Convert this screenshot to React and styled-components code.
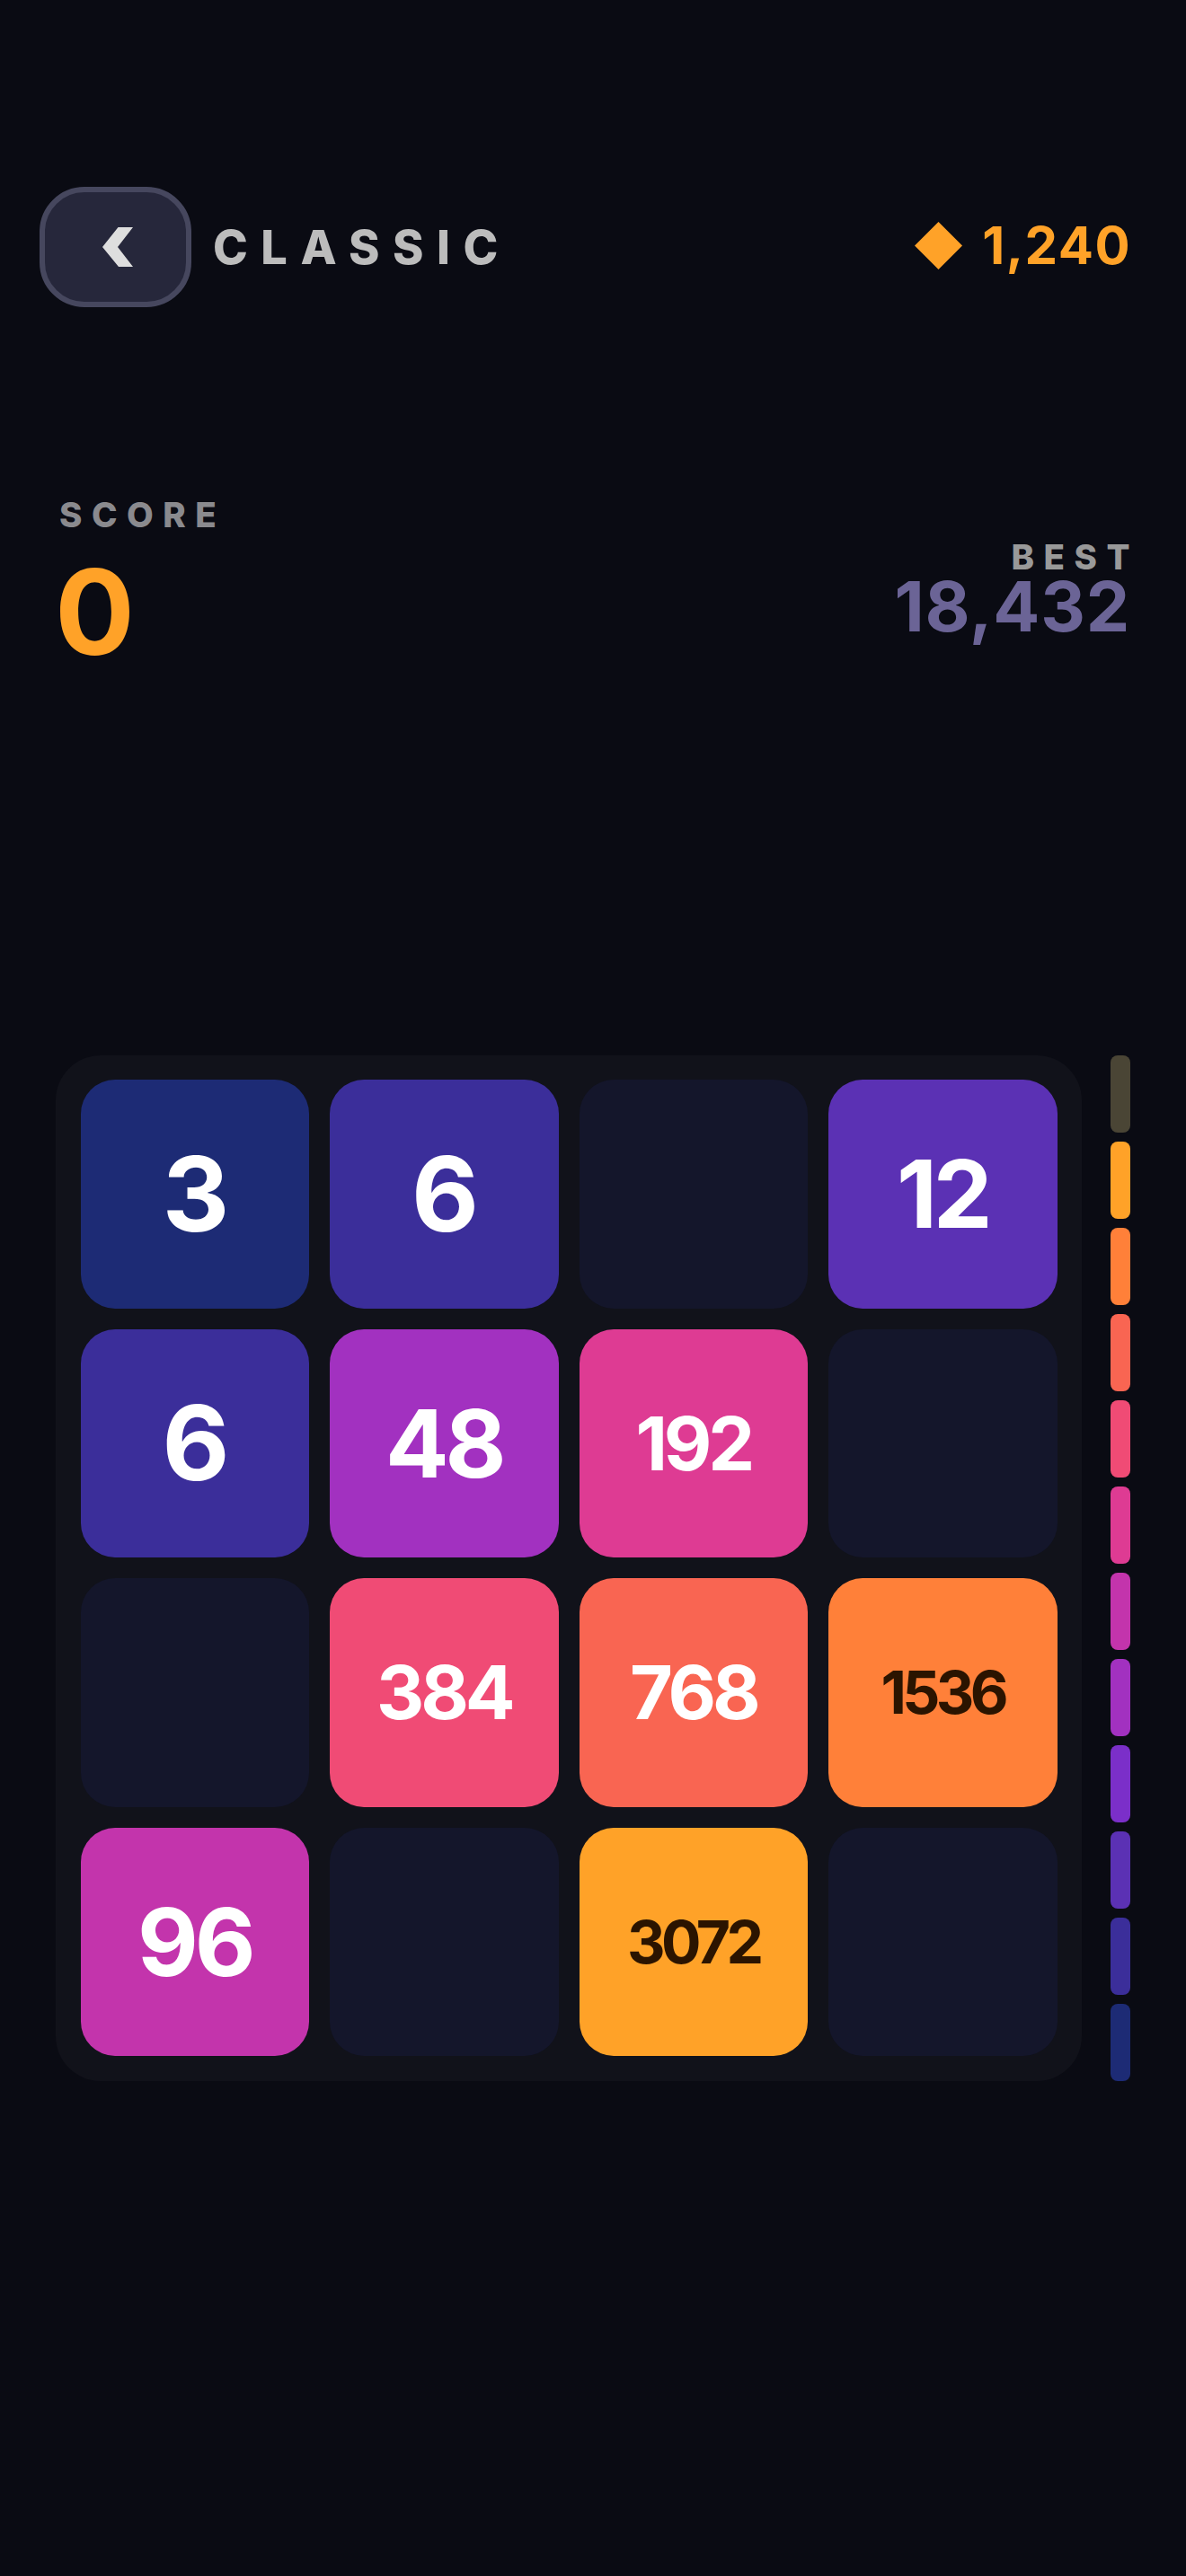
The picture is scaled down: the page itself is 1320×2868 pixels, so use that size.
import React from 'react'
import styled, { createGlobalStyle } from 'styled-components'

const GlobalStyle = createGlobalStyle`
  html, body {
    margin: 0;
    padding: 0;
    background: #0a0b13;
  }
  * {
    box-sizing: border-box;
  }
`

const Page = styled.div`
  width: 1320px;
  height: 2868px;
  overflow: hidden;
  padding-top: 208px;
  background: #0a0b13;
  font-family: Inter, "Liberation Sans", sans-serif;
`

const Header = styled.header`
  display: flex;
  align-items: center;
  justify-content: space-between;
  height: 134px;
  padding: 0 61px 0 44px;
`

const HeaderLeft = styled.div`
  display: flex;
  align-items: center;
  gap: 24px;
`

const BackButton = styled.button`
  display: flex;
  align-items: center;
  justify-content: center;
  width: 169px;
  height: 134px;
  padding: 0 0 0 4px;
  border: 6.5px solid #46475e;
  border-radius: 50px;
  background: #26273b;
`

const Title = styled.h1`
  margin: 0;
  font-size: 52.25px;
  font-weight: 800;
  line-height: 1;
  letter-spacing: 14.5px;
  color: #bcbcbc;
`

const Coins = styled.div`
  display: flex;
  align-items: center;
  gap: 22px;
  margin-bottom: 4px;
  font-size: 58px;
  font-weight: 700;
  line-height: 1;
  letter-spacing: 1.5px;
  color: #ffa228;
`

const ScoreRow = styled.section`
  display: flex;
  align-items: flex-end;
  justify-content: space-between;
  margin-top: 212px;
  padding: 0 62px 0 66px;
`

const ScoreBox = styled.div`
  display: flex;
  flex-direction: column;
  align-items: flex-start;
`

const BestBox = styled.div`
  display: flex;
  flex-direction: column;
  align-items: flex-end;
  padding-bottom: 36px;
`

const Label = styled.div`
  font-size: 38.5px;
  font-weight: 800;
  line-height: 1;
  letter-spacing: 10.5px;
  color: ${p => p.$color};
  margin-right: ${p => (p.$flush ? '-10px' : 0)};
`

const ScoreValue = styled.div`
  margin: 22px 0 0 -5px;
  font-size: 132px;
  font-weight: 700;
  line-height: 1;
  color: #ffa228;
`

const BestValue = styled.div`
  font-size: 77px;
  font-weight: 700;
  letter-spacing: 0.8px;
  line-height: 0.92;
  color: #6b6496;
`

const GameRow = styled.main`
  display: flex;
  gap: 32px;
  margin-top: 428px;
  padding: 0 62px;
`

const Board = styled.div`
  display: grid;
  grid-template-columns: repeat(4, 1fr);
  grid-template-rows: repeat(4, 1fr);
  gap: 23px;
  width: 1142px;
  height: 1142px;
  padding: 27.5px;
  border-radius: 50px;
  background: #11121a;
`

const Tile = styled.div`
  display: flex;
  align-items: center;
  justify-content: center;
  border-radius: 38px;
  font-size: ${p => p.$size}px;
  font-weight: 700;
  letter-spacing: ${p => p.$track}em;
  line-height: 1;
  color: ${p => p.$ink};
  background: ${p => p.$bg};
`

const Ladder = styled.div`
  display: flex;
  flex-direction: column;
  gap: 10px;
  width: 22px;
`

const Rung = styled.div`
  flex: 1;
  border-radius: 8px;
  background: ${p => p.$bg};
`

const palette = {
  3: '#1d2b75',
  6: '#3b2e9a',
  12: '#5b31b4',
  24: '#7b2fc9',
  48: '#a231c0',
  96: '#c334ac',
  192: '#de3b93',
  384: '#f04b75',
  768: '#f96552',
  1536: '#ff8039',
  3072: '#ffa228',
}

const cells = [3, 6, 0, 12, 6, 48, 192, 0, 0, 384, 768, 1536, 96, 0, 3072, 0]

const rungs = ['#4a4535', '#ffa228', '#ff8039', '#f96552', '#f04b75', '#de3b93', '#c334ac', '#a231c0', '#7b2fc9', '#5b31b4', '#3b2e9a', '#1d2b75']

// font size and tracking go by digit count
const typeFor = {
  1: { size: 115.5, track: -0.02 },
  2: { size: 104.5, track: -0.04 },
  3: { size: 82.5, track: -0.05 },
  4: { size: 66, track: -0.07 },
}

const Chevron = () => (
  <svg width="34" height="44" viewBox="0 0 34 44">
    <polygon points="17.5,0 34,0 17,22 34,44 18,44 0,22" fill="#dedede" />
  </svg>
)

const Diamond = () => (
  <svg width="53" height="53" viewBox="0 0 54 54">
    <polygon points="27,0 54,27 27,54 0,27" fill="#ffa228" />
  </svg>
)

export default function App() {
  return (
    <Page>
      <GlobalStyle />
      <Header>
        <HeaderLeft>
          <BackButton aria-label="Back">
            <Chevron />
          </BackButton>
          <Title>CLASSIC</Title>
        </HeaderLeft>
        <Coins>
          <Diamond />
          1,240
        </Coins>
      </Header>
      <ScoreRow>
        <ScoreBox>
          <Label $color="#8a8a8e">SCORE</Label>
          <ScoreValue>0</ScoreValue>
        </ScoreBox>
        <BestBox>
          <Label $color="#999999" $flush>BEST</Label>
          <BestValue>18,432</BestValue>
        </BestBox>
      </ScoreRow>
      <GameRow>
        <Board>
          {cells.map((value, i) => {
            const type = typeFor[String(value).length]
            return (
              <Tile
                key={i}
                $bg={value ? palette[value] : '#14162b'}
                $ink={value >= 1536 ? '#2b1400' : '#ffffff'}
                $size={type.size}
                $track={type.track}
              >
                {value || ''}
              </Tile>
            )
          })}
        </Board>
        <Ladder>
          {rungs.map((color, i) => (
            <Rung key={i} $bg={color} />
          ))}
        </Ladder>
      </GameRow>
    </Page>
  )
}
